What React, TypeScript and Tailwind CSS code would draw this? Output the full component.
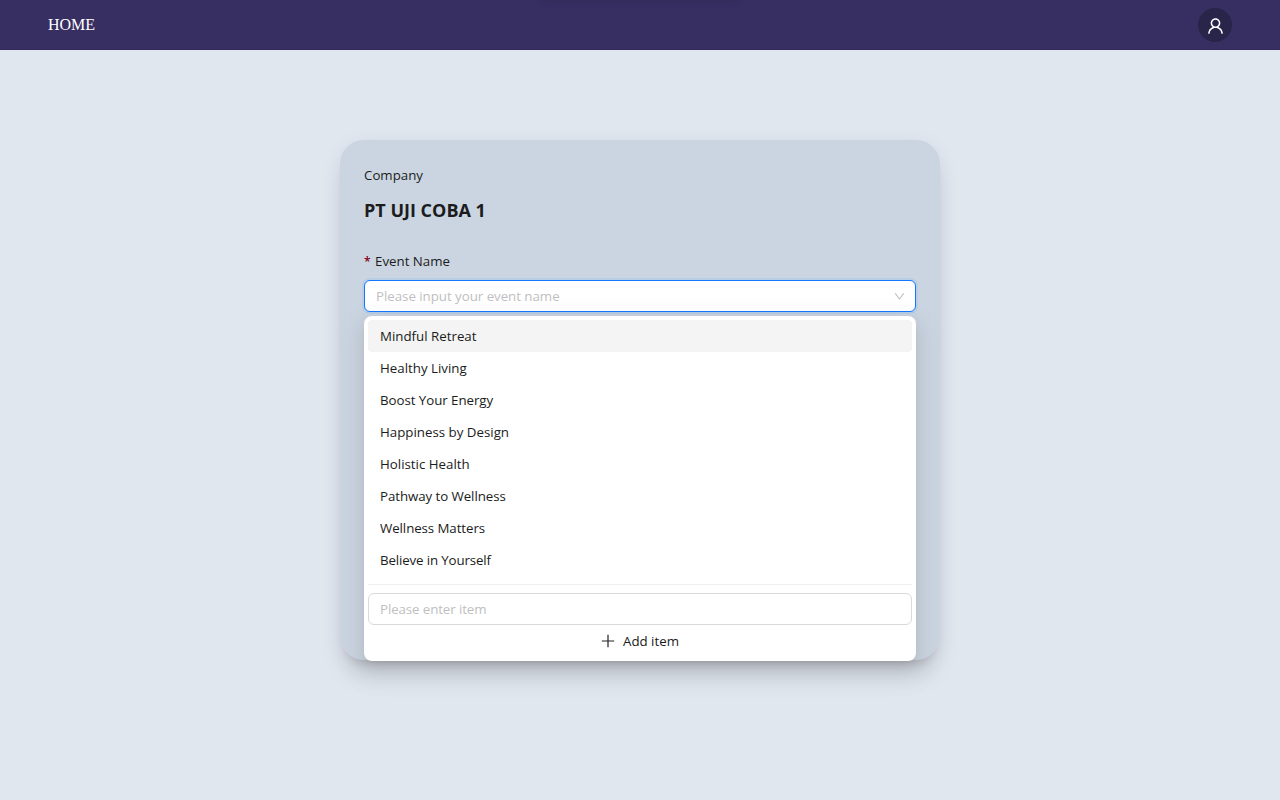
import { AiOutlineUser, AiOutlineDown } from "react-icons/ai";

const events = [
  { name: "Mindful Retreat", spacing: "" },
  { name: "Healthy Living", spacing: "" },
  { name: "Boost Your Energy", spacing: "tracking-[-0.05px]" },
  { name: "Happiness by Design", spacing: "" },
  { name: "Holistic Health", spacing: "" },
  { name: "Pathway to Wellness", spacing: "tracking-[-0.07px]" },
  { name: "Wellness Matters", spacing: "tracking-[-0.08px]" },
  { name: "Believe in Yourself", spacing: "tracking-[-0.14px]" },
];

function Navbar() {
  return (
    <header className="relative flex h-[50px] items-center justify-between bg-[#372f62] px-12 shadow-[inset_0_-1px_0_#332b5c]">
      <div className="absolute -top-2 left-1/2 h-2 w-[200px] -translate-x-1/2 shadow-[0_0_10px_rgba(0,0,0,0.12)]" />
      <a className="font-['Liberation_Serif',serif] text-base leading-6 text-white">HOME</a>
      <button className="flex size-[34px] items-center justify-center rounded-full bg-[#29244a] text-white">
        <AiOutlineUser size={20} className="translate-x-[0.5px] translate-y-px" />
      </button>
    </header>
  );
}

function EventDropdown() {
  return (
    <div className="absolute top-9 left-0 w-full rounded-lg bg-white p-1 shadow-[0_6px_16px_0_rgba(0,0,0,0.08),0_3px_6px_-4px_rgba(0,0,0,0.12),0_9px_28px_8px_rgba(0,0,0,0.05)]">
      <ul>
        {events.map((event, i) => (
          <li
            key={event.name}
            className={`h-8 rounded px-3 py-[5px] leading-[22px] ${i === 0 ? "bg-[#f4f4f4]" : ""}`}
          >
            <span className={event.spacing}>{event.name}</span>
          </li>
        ))}
      </ul>
      <div className="my-2 h-px bg-[#f0f0f0]" />
      <div className="flex h-8 items-center rounded-md border border-[#d9d9d9] px-[11px] leading-[22px] text-[#c0c0c0]">
        <span className="tracking-[-0.1px]">Please enter item</span>
      </div>
      <button className="flex h-8 w-full items-center justify-center gap-2 leading-[22px]">
        <svg width="14" height="14" viewBox="0 0 14 14" stroke="#222" strokeWidth="1.2" aria-hidden="true">
          <path d="M.8 7h12.4M7 .8v12.4" />
        </svg>
        <span>Add item</span>
      </button>
    </div>
  );
}

export default function App() {
  return (
    <div className="h-[800px] overflow-hidden bg-[#e0e7ef] font-['Open_Sans','Noto_Sans',sans-serif] text-[13.3px] text-[#1a1c20]">
      <Navbar />
      <main className="flex justify-center pt-[90px]">
        <section className="h-[520px] w-[600px] rounded-3xl bg-[#cbd5e1] p-6 shadow-[0_20px_25px_-5px_rgba(0,0,0,0.1),0_8px_10px_-6px_rgba(0,0,0,0.12),0_4px_20px_0_rgba(80,30,90,0.07)]">
          <p className="leading-[22px]">
            <span>Company</span>
          </p>
          <h1 className="mt-[10px] text-lg leading-7 font-bold">
            <span>PT UJI COBA 1</span>
          </h1>
          <label className="mt-[26px] flex h-[22px] gap-1 leading-[22px]">
            <span className="w-[7px] pt-px text-[12px] font-semibold text-[#820014]">*</span>
            <span>Event Name</span>
          </label>
          <div className="relative mt-2">
            <div className="flex h-8 items-center justify-between rounded-md border border-[#1677ff] bg-white pr-[9.5px] pl-[11px] leading-[22px] text-[#bfbfbf] shadow-[0_0_0_2px_rgba(5,145,255,0.1)]">
              <span className="tracking-[-0.03px]">Please input your event name</span>
              <AiOutlineDown size={13} />
            </div>
            <EventDropdown />
          </div>
        </section>
      </main>
    </div>
  );
}
